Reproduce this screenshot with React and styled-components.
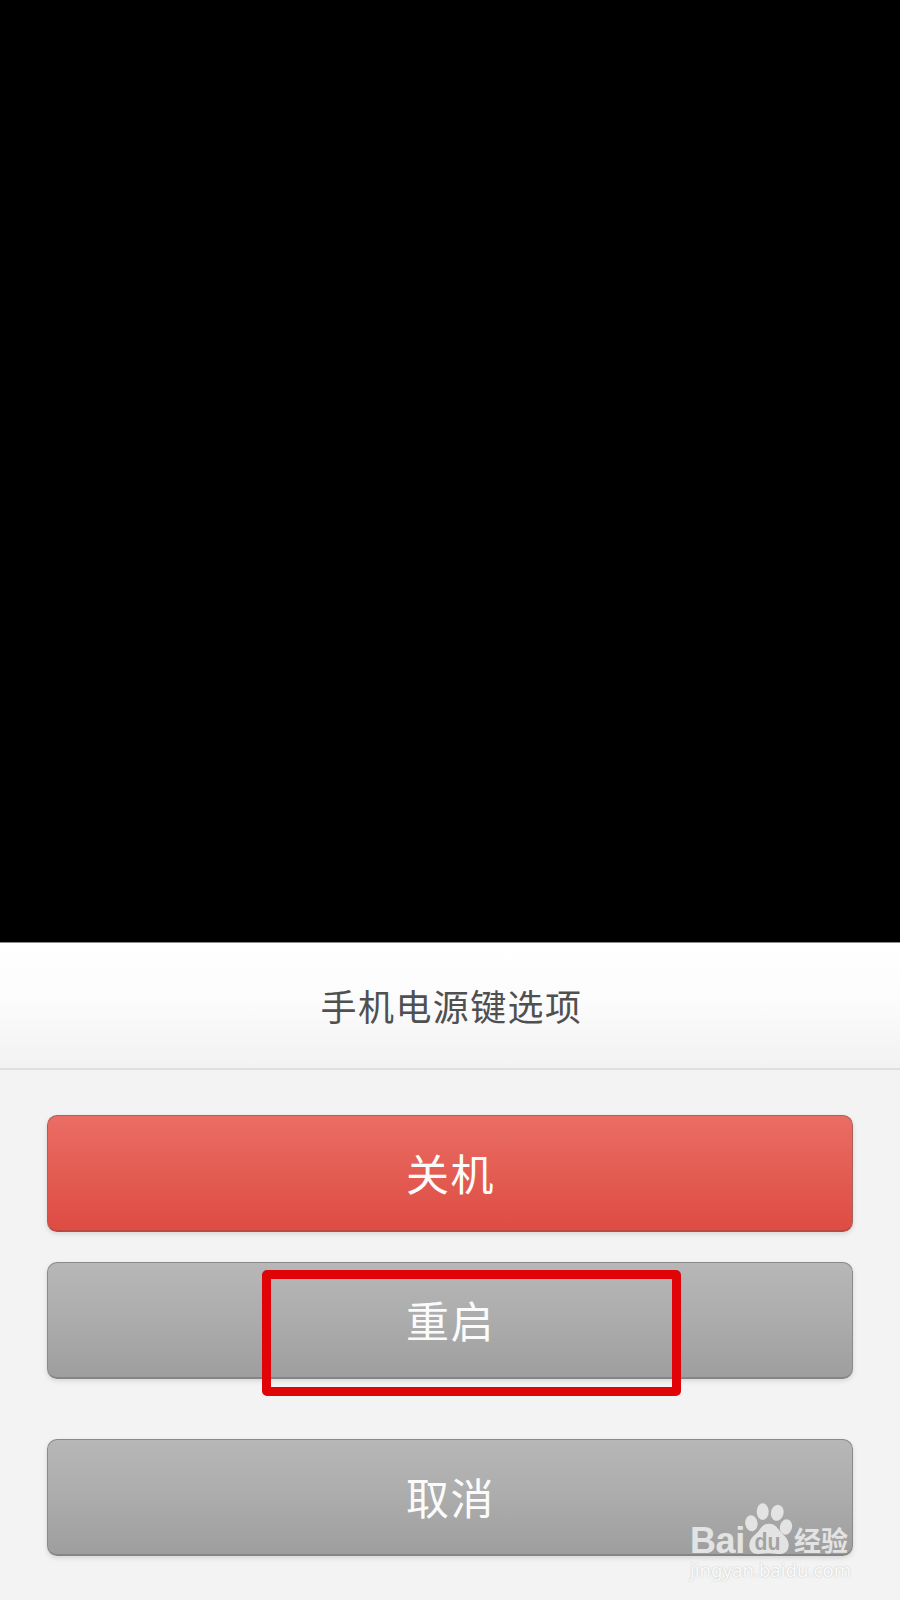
import React from "react";
import styled, { createGlobalStyle } from "styled-components";

export default function App() {
  return (
    <Screen>
      <GlobalStyle />
      <Sheet>
        <SheetHeader>
          <Title>手机电源键选项</Title>
        </SheetHeader>
        <Options>
          <OptionButton $danger>关机</OptionButton>
          <OptionSlot>
            <OptionButton>重启</OptionButton>
            <Highlight />
          </OptionSlot>
          <CancelButton>取消</CancelButton>
        </Options>
      </Sheet>
      <Watermark>
        <Brand>
          <BrandLatin>Bai</BrandLatin>
          <Paw />
          <BrandHan>经验</BrandHan>
        </Brand>
        <Site>jingyan.baidu.com</Site>
      </Watermark>
    </Screen>
  );
}

function Paw() {
  return (
    <PawSvg viewBox="0 0 48 53" width="48" height="53">
      <g fill="#e3e3e3">
        <ellipse cx="6.4" cy="21.2" rx="6.2" ry="8.1" transform="rotate(-8 6.4 21.2)" />
        <ellipse cx="17.7" cy="9.6" rx="6" ry="8.4" />
        <ellipse cx="32.3" cy="10.8" rx="6.3" ry="8.1" transform="rotate(12 32.3 10.8)" />
        <ellipse cx="41" cy="25" rx="6" ry="7.8" transform="rotate(14 41 25)" />
        <path d="M24 21.7C19 21.7 16.8 24.6 14 28.5C11 32.5 4.3 35.8 4.3 43C4.3 49 8 52 12.5 52C16.5 52 19.5 51.2 24 51.2C28.5 51.2 31.5 52 35.5 52C40.3 52 43.7 48.5 43.7 43C43.7 36.3 37.8 32.7 34.5 28.5C31.3 24.5 29 21.7 24 21.7Z" />
      </g>
      <PawText x="9.6" y="47.6" textLength="26" lengthAdjust="spacingAndGlyphs">
        du
      </PawText>
    </PawSvg>
  );
}

const GlobalStyle = createGlobalStyle`
  * {
    box-sizing: border-box;
  }

  body {
    margin: 0;
    background-color: #000000;
    font-family: "Noto Sans CJK SC", "Noto Sans", sans-serif;
  }
`;

const Screen = styled.main`
  position: relative;
  display: flex;
  flex-direction: column;
  justify-content: flex-end;
  width: 900px;
  height: 1600px;
  overflow: hidden;
  background-color: #000000;
`;

const Sheet = styled.section`
  height: 658px;
  background-color: #f3f3f3;
`;

const SheetHeader = styled.header`
  display: flex;
  align-items: center;
  justify-content: center;
  height: 128px;
  border-top: 1px solid #8c8c8c;
  border-bottom: 2px solid #dfdfdf;
  background: linear-gradient(#ffffff, #fcfcfc 45%, #f2f2f2);
`;

const Title = styled.h1`
  margin: 0;
  padding: 0 0 1px 3px;
  font-size: 36px;
  font-weight: 400;
  line-height: 50px;
  letter-spacing: 1.4px;
  color: #505050;
`;

const Options = styled.div`
  display: flex;
  flex-direction: column;
  gap: 30px;
  padding: 45px 47px 0;
`;

const OptionSlot = styled.div`
  position: relative;
  display: flex;
`;

const OptionButton = styled.button`
  flex: none;
  width: 100%;
  height: 117px;
  padding: 0 0 3px 1px;
  border: 1px solid ${(props) => (props.$danger ? "#a9605b" : "#8a8a8a")};
  border-bottom: 2px solid ${(props) => (props.$danger ? "#b84840" : "#858585")};
  border-radius: 10px;
  background: ${(props) =>
    props.$danger
      ? "linear-gradient(#ea6d64, #e2594f 60%, #de4c44)"
      : "linear-gradient(#b7b7b7, #acacac 50%, #9e9e9e)"};
  box-shadow: 0 2px 5px rgba(0, 0, 0, 0.12);
  font-family: inherit;
  font-size: 43px;
  line-height: 60px;
  letter-spacing: 1.4px;
  color: #fbfbfb;
  cursor: pointer;
`;

const CancelButton = styled(OptionButton)`
  margin-top: 30px;
`;

// red marker around the restart option
const Highlight = styled.div`
  position: absolute;
  top: 8px;
  left: 215px;
  width: 419px;
  height: 126px;
  border: 9px solid #e00308;
  border-radius: 5px;
  pointer-events: none;
`;

const Watermark = styled.div`
  position: absolute;
  right: 47px;
  bottom: 14px;
  width: 163px;
  height: 84px;
`;

const Brand = styled.div`
  display: flex;
  align-items: flex-end;
  height: 53px;
  color: #e3e3e3;
`;

const BrandLatin = styled.span`
  width: 55px;
  margin-bottom: -4px;
  font-family: "Liberation Sans", Arial, sans-serif;
  font-size: 36px;
  font-weight: 700;
  line-height: 36px;
  letter-spacing: -0.4px;
`;

const PawSvg = styled.svg`
  flex: none;
  display: block;
  overflow: visible;
`;

const PawText = styled.text`
  font-family: "Liberation Sans", Arial, sans-serif;
  font-size: 23px;
  font-weight: 700;
  fill: #a3a3a3;
`;

const BrandHan = styled.span`
  margin: 0 0 1px 1px;
  font-size: 27px;
  font-weight: 700;
  line-height: 28px;
  white-space: nowrap;
`;

const Site = styled.div`
  padding-top: 2px;
  font-family: "Noto Sans", sans-serif;
  font-size: 18.6px;
  line-height: 25px;
  white-space: nowrap;
  color: #fafafa;
  text-shadow: 0 0 2px #c8c8c8, 0 0 1px #dcdcdc;
`;
